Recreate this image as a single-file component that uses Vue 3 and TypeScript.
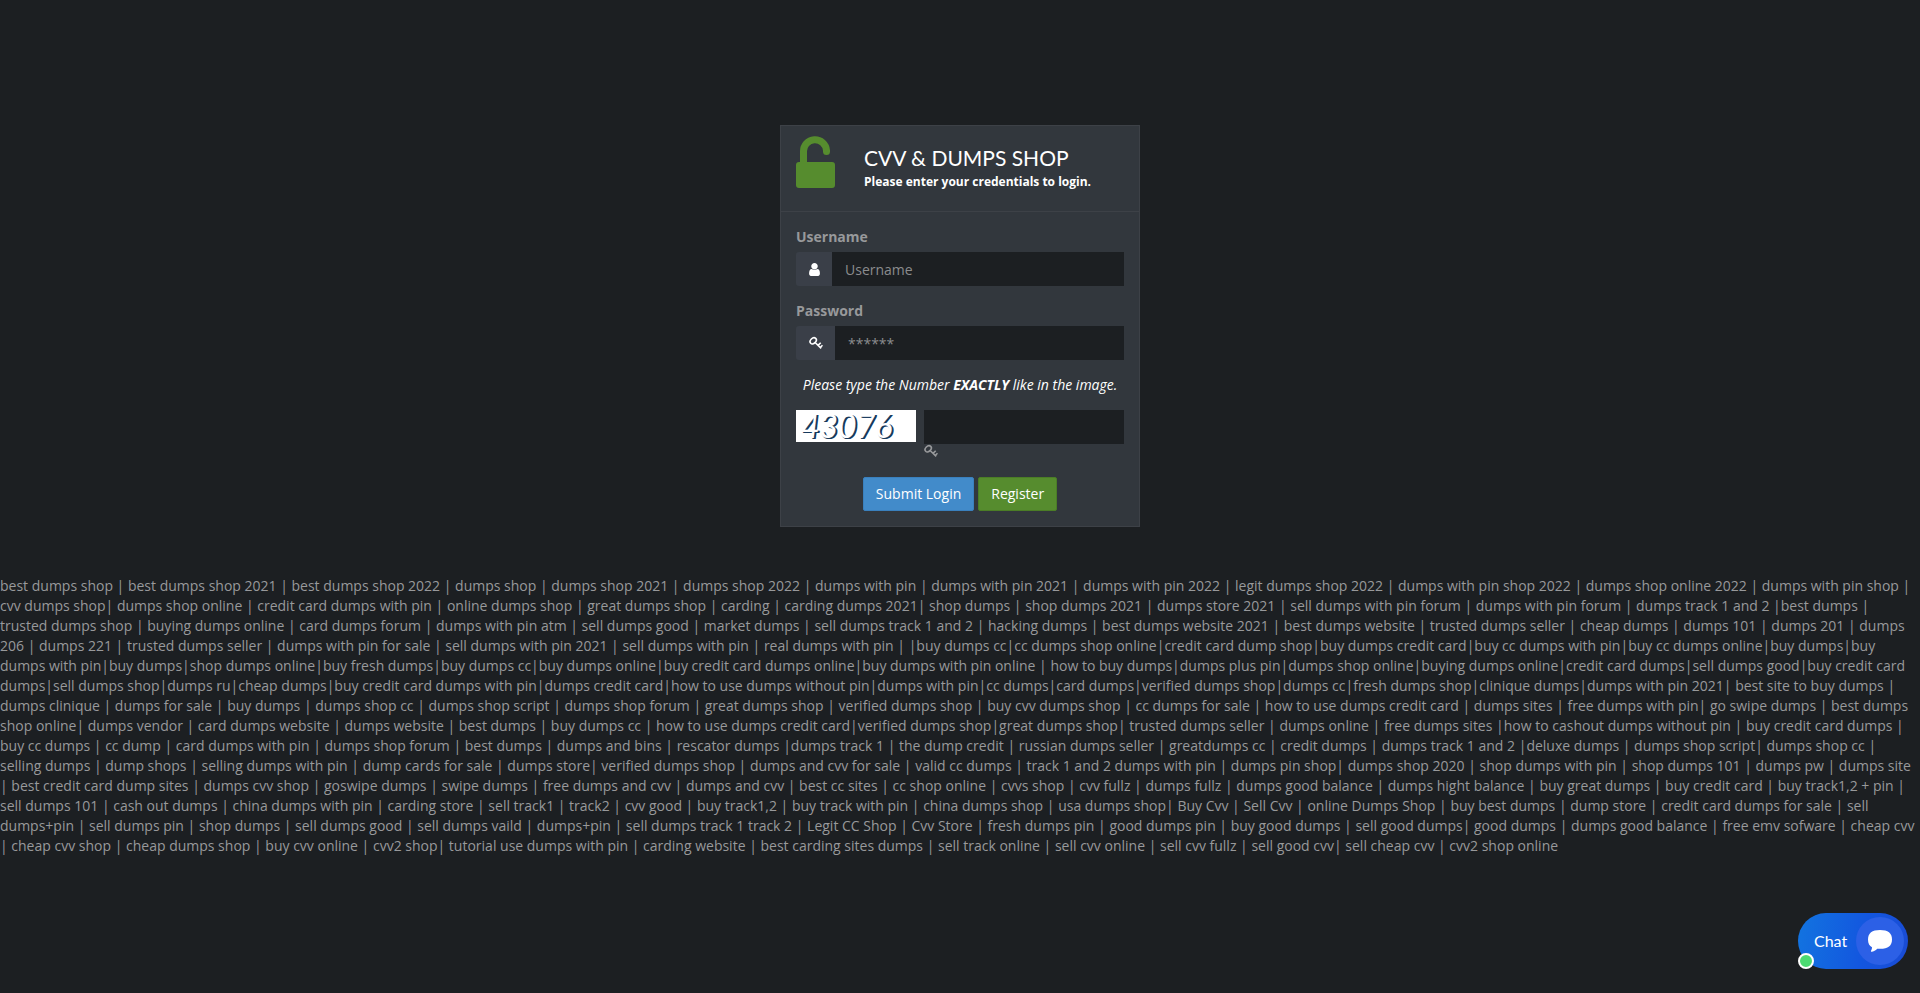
<script setup lang="ts">
import { ref } from 'vue'

const username = ref('')
const password = ref('')
const code = ref('')
</script>

<template>
  <main class="page">
    <form class="card" @submit.prevent>
      <header class="head">
        <svg class="lock" viewBox="0 0 39 53" aria-hidden="true">
          <path d="M7.500 29V16a11.500 11.500 0 0 1 23 -1.500v1" fill="none" stroke="#568c2e" stroke-width="7" stroke-linecap="round" />
          <rect y="26" width="39" height="26" rx="3" fill="#568c2e" />
        </svg>
        <div>
          <h1>CVV &amp; DUMPS SHOP</h1>
          <p class="sub">Please enter your credentials to login.</p>
        </div>
      </header>
      <div class="body">
        <div class="field">
          <label for="username">Username</label>
          <div class="group">
            <span class="addon">
              <svg viewBox="256 128 1280 1536" class="user" aria-hidden="true">
                <path d="M1536 1399q0 109-62.500 187t-150.500 78h-854q-88 0-150.500-78t-62.500-187q0-85 8.500-160.500t31.500-152 58.500-131 94-89 134.500-34.500q131 128 313 128t313-128q76 0 134.500 34.500t94 89 58.500 131 31.500 152 8.500 160.500zm-256-887q0 159-112.500 271.500t-271.500 112.500-271.500-112.500-112.500-271.500 112.500-271.500 271.500-112.500 271.500 112.500 112.500 271.500z" />
              </svg>
            </span>
            <input id="username" v-model="username" type="text" placeholder="Username" />
          </div>
        </div>
        <div class="field">
          <label for="password">Password</label>
          <div class="group">
            <span class="addon">
              <svg viewBox="0 0 14 14" class="key" aria-hidden="true">
                <ellipse cx="4.200" cy="4.800" rx="3.500" ry="2.600" transform="rotate(-45 4.200 4.800)" />
                <path d="M5.800 6.200l6.400 6.200M8.800 9.600l2.900-2.900M11 11.700l2.500-2.500" />
              </svg>
            </span>
            <input id="password" v-model="password" type="password" placeholder="******" />
          </div>
        </div>
        <p class="note" id="code-note">Please type the Number <b>EXACTLY</b> like in the image.</p>
        <div class="check">
          <div class="captcha">43076</div>
          <div class="code">
            <input id="code" v-model="code" type="text" aria-labelledby="code-note" />
            <svg viewBox="0 0 14 14" class="key" aria-hidden="true">
              <ellipse cx="4.200" cy="4.800" rx="3.500" ry="2.600" transform="rotate(-45 4.200 4.800)" />
              <path d="M5.800 6.200l6.400 6.200M8.800 9.600l2.900-2.900M11 11.700l2.500-2.500" />
            </svg>
          </div>
        </div>
        <div class="actions">
          <button type="submit" class="btn blue">Submit Login</button>
          <button type="button" class="btn green">Register</button>
        </div>
      </div>
    </form>

    <p class="terms">
      best dumps shop | best dumps shop 2021 | best dumps shop 2022 | dumps shop | dumps shop 2021 | dumps shop 2022 | dumps with pin | dumps with pin 2021 | dumps with pin 2022 | legit dumps shop 2022 | dumps with pin shop 2022 | dumps shop online 2022 | dumps with pin shop |
      cvv dumps shop| dumps shop online | credit card dumps with pin | online dumps shop | great dumps shop | carding | carding dumps 2021| shop dumps | shop dumps 2021 | dumps store 2021 | sell dumps with pin forum | dumps with pin forum | dumps track 1 and 2 |best dumps |
      trusted dumps shop | buying dumps online | card dumps forum | dumps with pin atm | sell dumps good | market dumps | sell dumps track 1 and 2 | hacking dumps | best dumps website 2021 | best dumps website | trusted dumps seller | cheap dumps | dumps 101 | dumps 201 | dumps
      206 | dumps 221 | trusted dumps seller | dumps with pin for sale | sell dumps with pin 2021 | sell dumps with pin | real dumps with pin | |buy dumps cc|cc dumps shop online|credit card dump shop|buy dumps credit card|buy cc dumps with pin|buy cc dumps online|buy dumps|buy
      dumps with pin|buy dumps|shop dumps online|buy fresh dumps|buy dumps cc|buy dumps online|buy credit card dumps online|buy dumps with pin online | how to buy dumps|dumps plus pin|dumps shop online|buying dumps online|credit card dumps|sell dumps good|buy credit card
      dumps|sell dumps shop|dumps ru|cheap dumps|buy credit card dumps with pin|dumps credit card|how to use dumps without pin|dumps with pin|cc dumps|card dumps|verified dumps shop|dumps cc|fresh dumps shop|clinique dumps|dumps with pin 2021| best site to buy dumps |
      dumps clinique | dumps for sale | buy dumps | dumps shop cc | dumps shop script | dumps shop forum | great dumps shop | verified dumps shop | buy cvv dumps shop | cc dumps for sale | how to use dumps credit card | dumps sites | free dumps with pin| go swipe dumps | best dumps
      shop online| dumps vendor | card dumps website | dumps website | best dumps | buy dumps cc | how to use dumps credit card|verified dumps shop|great dumps shop| trusted dumps seller | dumps online | free dumps sites |how to cashout dumps without pin | buy credit card dumps |
      buy cc dumps | cc dump | card dumps with pin | dumps shop forum | best dumps | dumps and bins | rescator dumps |dumps track 1 | the dump credit | russian dumps seller | greatdumps cc | credit dumps | dumps track 1 and 2 |deluxe dumps | dumps shop script| dumps shop cc |
      selling dumps | dump shops | selling dumps with pin | dump cards for sale | dumps store| verified dumps shop | dumps and cvv for sale | valid cc dumps | track 1 and 2 dumps with pin | dumps pin shop| dumps shop 2020 | shop dumps with pin | shop dumps 101 | dumps pw | dumps site
      | best credit card dump sites | dumps cvv shop | goswipe dumps | swipe dumps | free dumps and cvv | dumps and cvv | best cc sites | cc shop online | cvvs shop | cvv fullz | dumps fullz | dumps good balance | dumps hight balance | buy great dumps | buy credit card | buy track1,2 + pin |
      sell dumps 101 | cash out dumps | china dumps with pin | carding store | sell track1 | track2 | cvv good | buy track1,2 | buy track with pin | china dumps shop | usa dumps shop| Buy Cvv | Sell Cvv | online Dumps Shop | buy best dumps | dump store | credit card dumps for sale | sell
      dumps+pin | sell dumps pin | shop dumps | sell dumps good | sell dumps vaild | dumps+pin | sell dumps track 1 track 2 | Legit CC Shop | Cvv Store | fresh dumps pin | good dumps pin | buy good dumps | sell good dumps| good dumps | dumps good balance | free emv sofware | cheap cvv
      | cheap cvv shop | cheap dumps shop | buy cvv online | cvv2 shop| tutorial use dumps with pin | carding website | best carding sites dumps | sell track online | sell cvv online | sell cvv fullz | sell good cvv| sell cheap cvv | cvv2 shop online
    </p>

    <button type="button" class="chat">
      <span>Chat</span>
      <span class="bubble">
        <svg viewBox="0 0 24 22" aria-hidden="true">
          <path d="M12 0C4 0 0 3 0 9.500c0 4 1.500 6.500 4 7.700 0 1.600-.4 2.600-1 3.600-.3.700.2 1.200 1 1 2.400-.6 4-1.800 5.200-3.100 10 .8 14.800-2.200 14.800-9.200C24 3 20 0 12 0z" fill="#fff" />
        </svg>
      </span>
      <i class="online"></i>
    </button>
  </main>
</template>

<style>
body {
  margin: 0;
  background: #1c1f22;
}
</style>

<style scoped>
.page {
  box-sizing: border-box;
  min-height: 100vh;
  padding-top: 125px;
  font: 14px/20px "Open Sans", "Noto Sans", sans-serif;
  color: #98999b;
}
.card {
  box-sizing: border-box;
  width: 360px;
  max-width: 100%;
  margin: 0 auto;
  background: #32373d;
  border: 1px solid #3d4147;
}
.head {
  display: flex;
  gap: 29px;
  padding: 10px 15px 19px;
  border-bottom: 1px solid #3d4147;
  color: #fff;
}
.lock {
  width: 39px;
  height: 53px;
}
h1 {
  margin: 8px 0 0;
  font: 400 21px/28px Lato, sans-serif;
}
.sub {
  margin: 0;
  font-size: 12px;
  font-weight: 700;
  line-height: 20px;
}
.body {
  padding: 15px;
}
.field {
  margin-bottom: 15px;
}
label {
  display: block;
  margin-bottom: 5px;
  font-weight: 700;
}
.group {
  display: flex;
}
.addon {
  display: flex;
  align-items: center;
  padding: 0 12px 0 13px;
  background: #3a3f48;
  border-radius: 3px 0 0 3px;
}
svg {
  display: block;
  flex: none;
}
.user {
  width: 11px;
  height: 13px;
  fill: #fff;
}
.key {
  width: 14px;
  height: 14px;
  fill: none;
  stroke: #98999b;
  stroke-width: 1.6;
}
.addon .key {
  stroke: #fff;
}
input {
  box-sizing: border-box;
  flex: 1;
  min-width: 0;
  width: 100%;
  height: 34px;
  padding: 6px 13px;
  border: 0;
  border-radius: 0;
  background: #1c1f22;
  color: #c0c1c3;
  font: inherit;
}
input::placeholder {
  color: #8b8c8e;
  opacity: 1;
}
.note {
  margin: 0 0 15px;
  text-align: center;
  font-style: italic;
  color: #fff;
}
.check {
  display: flex;
  gap: 8px;
}
.captcha {
  box-sizing: border-box;
  width: 120px;
  height: 32px;
  padding-left: 5px;
  background: #fff;
  color: #fff;
  font: italic 400 32px/32px Lato, sans-serif;
  text-shadow: 1px 1px 0 #16395c, 2px 1px 0 #16395c;
}
.code {
  flex: 1;
}
.code input {
  display: block;
}
.actions {
  display: flex;
  justify-content: center;
  gap: 4px;
  margin-top: 19px;
}
.btn {
  padding: 6px 12px;
  border: 1px solid #3a80bd;
  border-radius: 2px;
  background: #428bca;
  color: #fff;
  font: inherit;
}
.green {
  background: #568c2e;
  border-color: #4b7d26;
}
.terms {
  margin: 49px 0 0;
}
.chat {
  position: fixed;
  right: 12px;
  bottom: 24px;
  display: flex;
  align-items: center;
  justify-content: space-between;
  width: 110px;
  height: 56px;
  padding: 0 4px 0 16px;
  border: 0;
  border-radius: 28px;
  background: linear-gradient(100deg, #1274e0, #1356df 60%, #1a4bd4);
  color: #fff;
  font: 16px/20px Lato, sans-serif;
}
.bubble {
  display: flex;
  align-items: center;
  justify-content: center;
  width: 48px;
  height: 48px;
  border-radius: 50%;
  background: #2c60e6;
}
.bubble svg {
  width: 24px;
  height: 22px;
}
.online {
  position: absolute;
  left: 0;
  bottom: 0;
  box-sizing: border-box;
  width: 16px;
  height: 16px;
  border: 2px solid #fff;
  border-radius: 50%;
  background: #4cdb72;
}
</style>
